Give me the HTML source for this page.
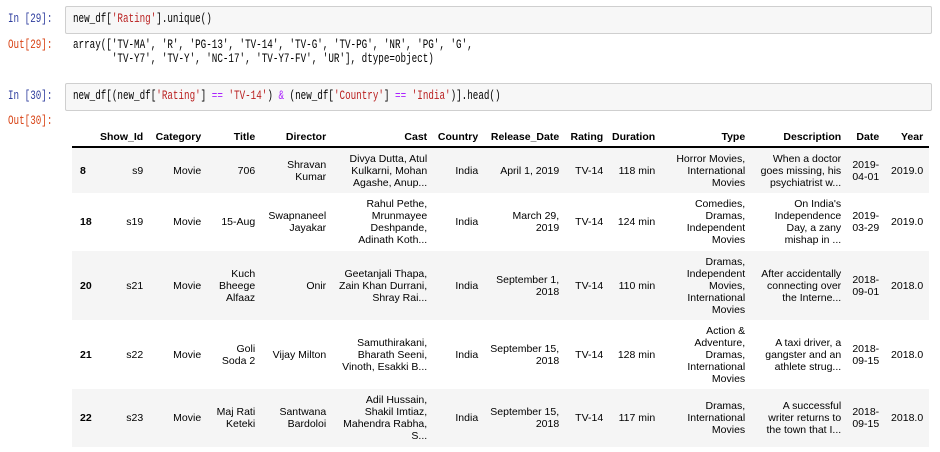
<!DOCTYPE html>
<html><head><meta charset="utf-8">
<style>
body{margin:0;width:940px;height:452px;background:#fff;position:relative;overflow:hidden;font-family:"Liberation Sans",sans-serif;}
.p{position:absolute;font-family:"Liberation Mono",monospace;font-size:12.5px;line-height:14px;transform:scaleX(0.74);transform-origin:0 0;white-space:pre;}
.in{color:#303f9f;}
.out{color:#d84315;}
.box{position:absolute;left:65px;width:865px;height:26px;background:#f7f7f7;border:1px solid #cfcfcf;border-radius:2px;}
.code{position:absolute;font-family:"Liberation Mono",monospace;font-size:12.5px;line-height:14px;color:#000;white-space:pre;transform:scaleX(0.74);transform-origin:0 0;}
.s{color:#ba2121}.o{color:#aa22ff}
table{position:absolute;left:72px;top:123px;border-collapse:collapse;table-layout:fixed;font-size:10.5px;line-height:12px;color:#000;}
th,td{text-align:right;white-space:nowrap;padding:0 6px 0 0;vertical-align:middle;}
thead th{height:20px;vertical-align:bottom;padding-bottom:3px;border-bottom:2px solid #000;}
tbody th{text-align:left;padding-left:8px;}
tbody tr:nth-child(odd){background:#f5f5f5;}
</style></head><body>
<div class="p in" style="left:8px;top:12px">In [29]:</div>
<div class="box" style="top:6px"></div>
<div class="code" style="left:73px;top:12px">new_df[<span class="s">'Rating'</span>].unique()</div>
<div class="p out" style="left:8px;top:38px">Out[29]:</div>
<div class="code" style="left:73px;top:38px">array(['TV-MA', 'R', 'PG-13', 'TV-14', 'TV-G', 'TV-PG', 'NR', 'PG', 'G',
       'TV-Y7', 'TV-Y', 'NC-17', 'TV-Y7-FV', 'UR'], dtype=object)</div>
<div class="p in" style="left:8px;top:89px">In [30]:</div>
<div class="box" style="top:83px"></div>
<div class="code" style="left:73px;top:89px">new_df[(new_df[<span class="s">'Rating'</span>] <span class="o">==</span> <span class="s">'TV-14'</span>) <span class="o">&amp;</span> (new_df[<span class="s">'Country'</span>] <span class="o">==</span> <span class="s">'India'</span>)].head()</div>
<div class="p out" style="left:8px;top:114px">Out[30]:</div>
<table>
<colgroup><col style="width:28px"><col style="width:46px"><col style="width:58px"><col style="width:54px"><col style="width:71px"><col style="width:101px"><col style="width:51px"><col style="width:81px"><col style="width:44px"><col style="width:52px"><col style="width:90px"><col style="width:96px"><col style="width:38px"><col style="width:44px"></colgroup>
<thead><tr><th></th><th>Show_Id</th><th>Category</th><th>Title</th><th>Director</th><th>Cast</th><th>Country</th><th>Release_Date</th><th>Rating</th><th>Duration</th><th>Type</th><th>Description</th><th>Date</th><th>Year</th></tr></thead>
<tbody>
<tr style="height:46px"><th>8</th><td>s9</td><td>Movie</td><td>706</td><td>Shravan<br>Kumar</td><td>Divya Dutta, Atul<br>Kulkarni, Mohan<br>Agashe, Anup...</td><td>India</td><td>April 1, 2019</td><td>TV-14</td><td>118 min</td><td>Horror Movies,<br>International<br>Movies</td><td>When a doctor<br>goes missing, his<br>psychiatrist w...</td><td>2019-<br>04-01</td><td>2019.0</td></tr>
<tr style="height:58px"><th>18</th><td>s19</td><td>Movie</td><td>15-Aug</td><td>Swapnaneel<br>Jayakar</td><td>Rahul Pethe,<br>Mrunmayee<br>Deshpande,<br>Adinath Koth...</td><td>India</td><td>March 29,<br>2019</td><td>TV-14</td><td>124 min</td><td>Comedies,<br>Dramas,<br>Independent<br>Movies</td><td>On India's<br>Independence<br>Day, a zany<br>mishap in ...</td><td>2019-<br>03-29</td><td>2019.0</td></tr>
<tr style="height:69px"><th>20</th><td>s21</td><td>Movie</td><td>Kuch<br>Bheege<br>Alfaaz</td><td>Onir</td><td>Geetanjali Thapa,<br>Zain Khan Durrani,<br>Shray Rai...</td><td>India</td><td>September 1,<br>2018</td><td>TV-14</td><td>110 min</td><td>Dramas,<br>Independent<br>Movies,<br>International<br>Movies</td><td>After accidentally<br>connecting over<br>the Interne...</td><td>2018-<br>09-01</td><td>2018.0</td></tr>
<tr style="height:69px"><th>21</th><td>s22</td><td>Movie</td><td>Goli<br>Soda 2</td><td>Vijay Milton</td><td>Samuthirakani,<br>Bharath Seeni,<br>Vinoth, Esakki B...</td><td>India</td><td>September 15,<br>2018</td><td>TV-14</td><td>128 min</td><td>Action &amp;<br>Adventure,<br>Dramas,<br>International<br>Movies</td><td>A taxi driver, a<br>gangster and an<br>athlete strug...</td><td>2018-<br>09-15</td><td>2018.0</td></tr>
<tr style="height:58px"><th>22</th><td>s23</td><td>Movie</td><td>Maj Rati<br>Keteki</td><td>Santwana<br>Bardoloi</td><td>Adil Hussain,<br>Shakil Imtiaz,<br>Mahendra Rabha,<br>S...</td><td>India</td><td>September 15,<br>2018</td><td>TV-14</td><td>117 min</td><td>Dramas,<br>International<br>Movies</td><td>A successful<br>writer returns to<br>the town that I...</td><td>2018-<br>09-15</td><td>2018.0</td></tr>
</tbody></table>
</body></html>
